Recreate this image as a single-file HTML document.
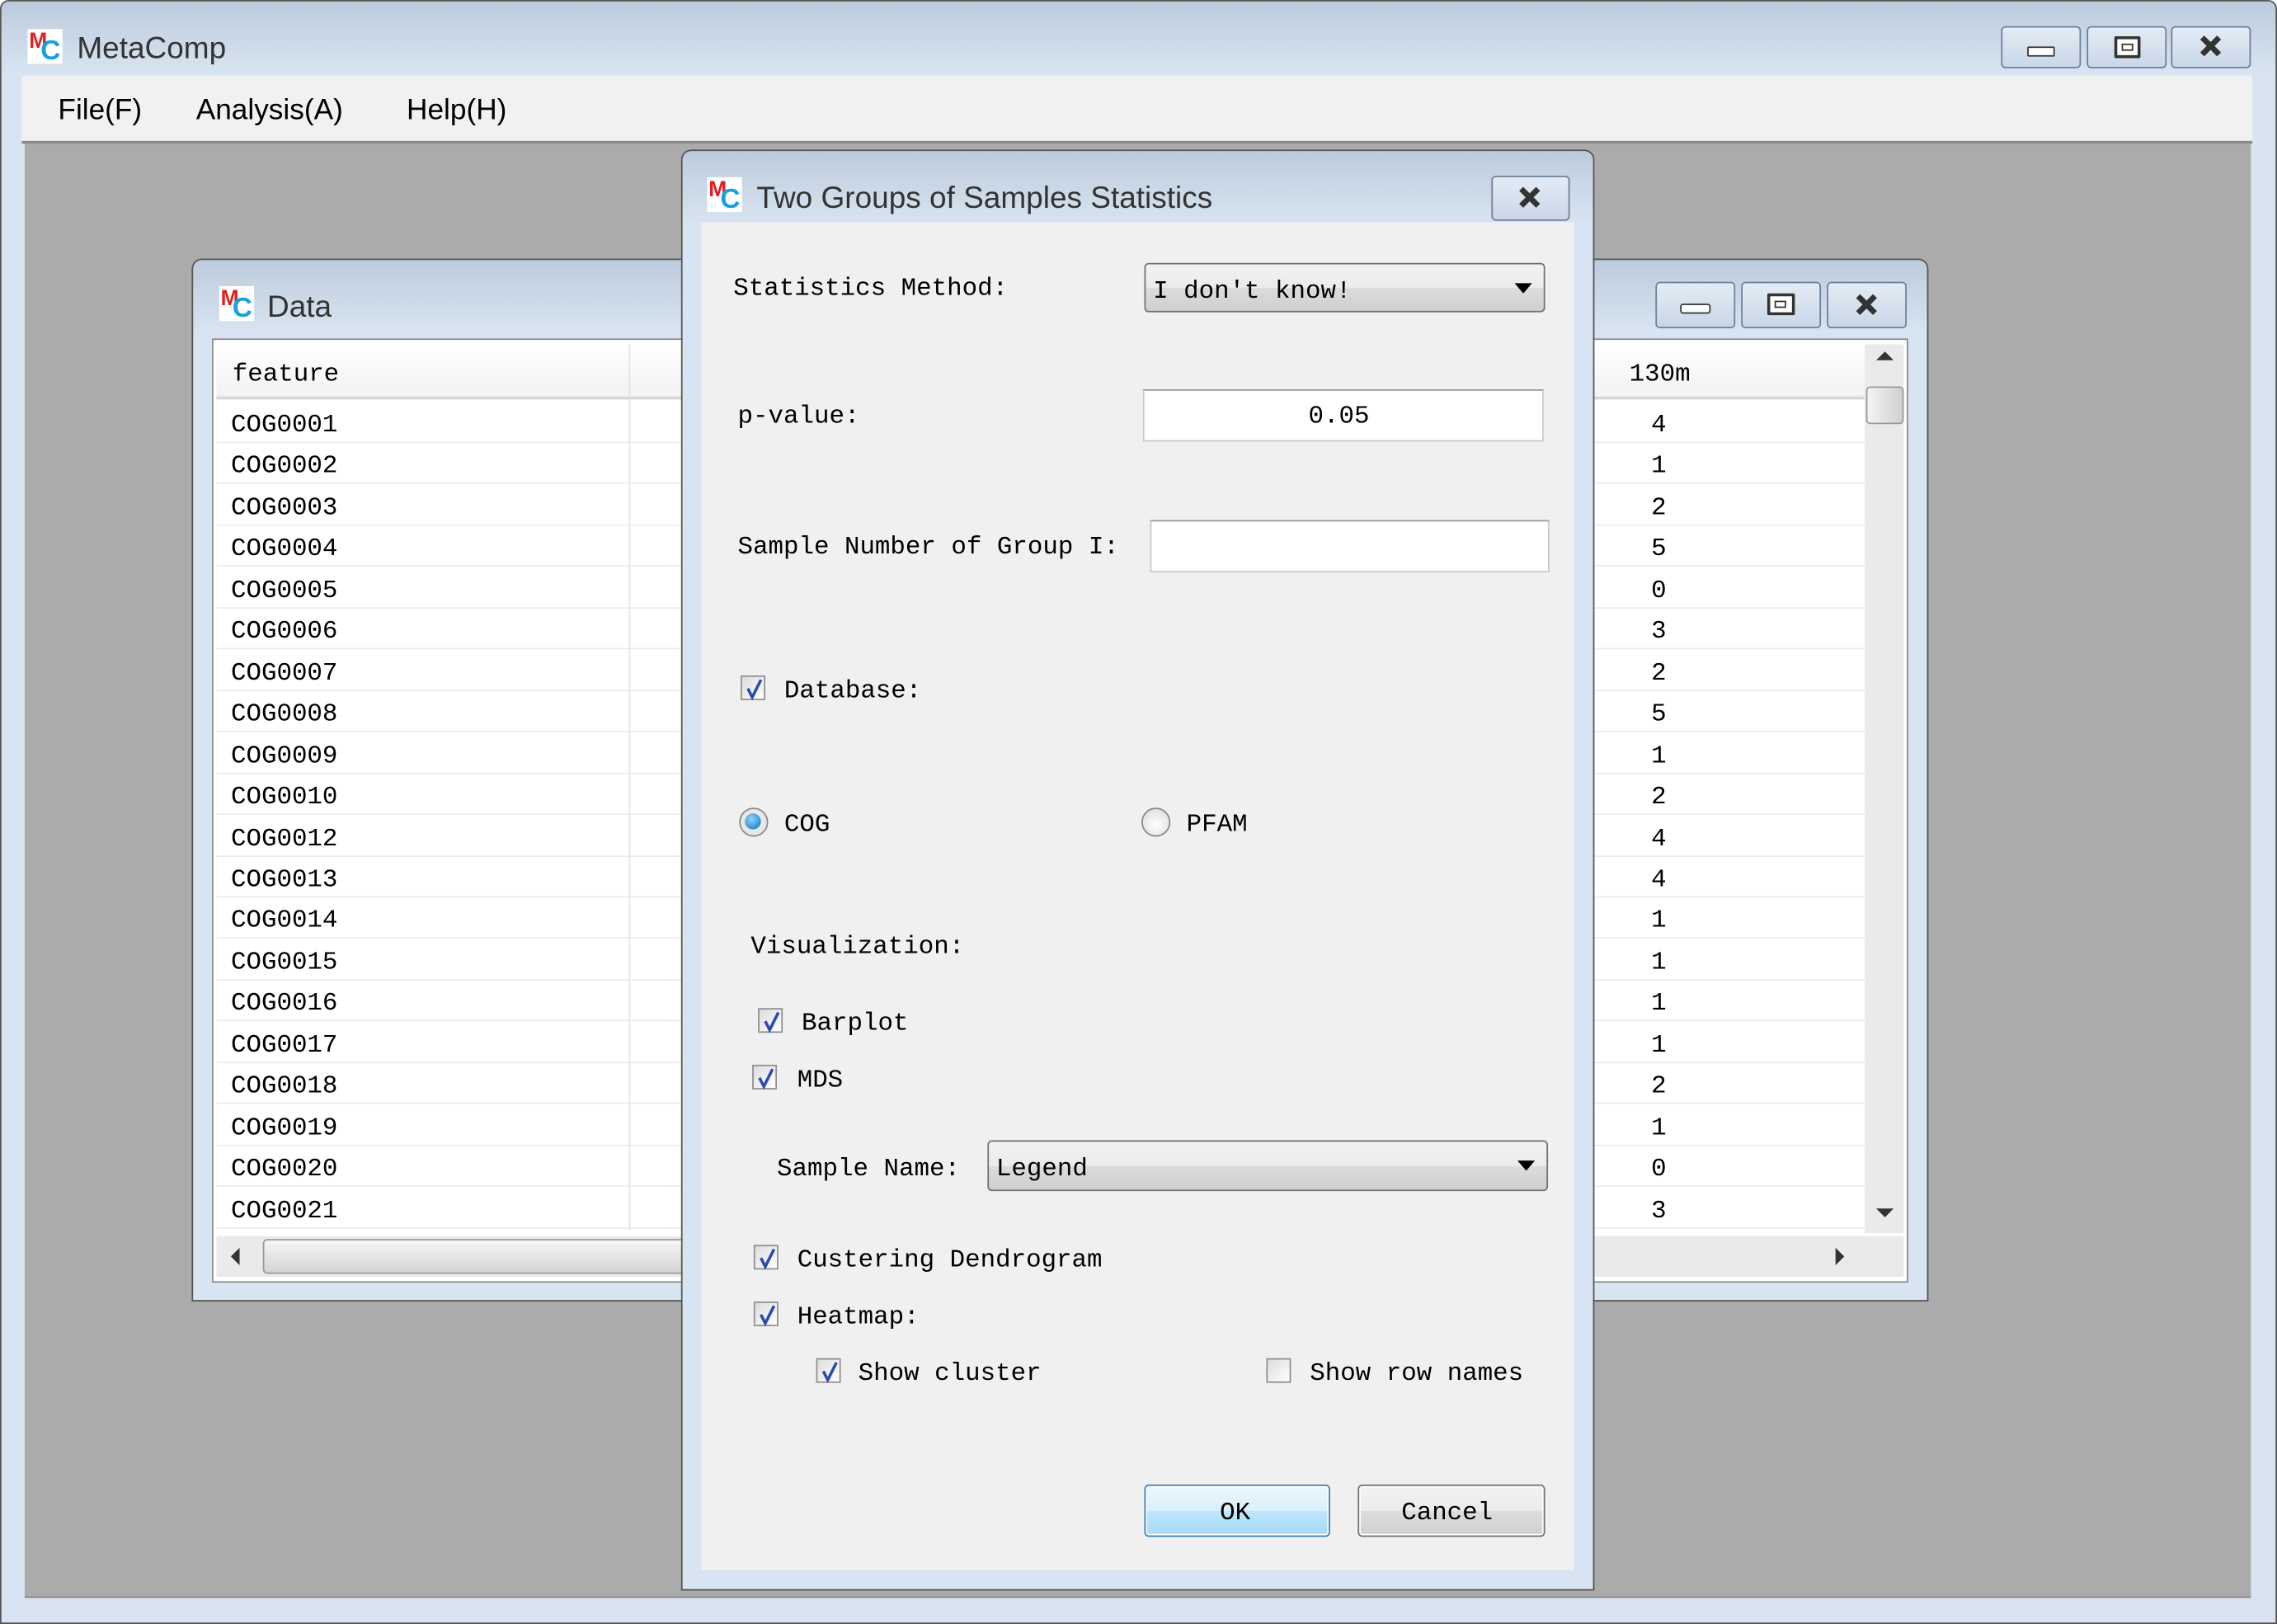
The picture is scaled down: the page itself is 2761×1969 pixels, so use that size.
<!DOCTYPE html>
<html><head><meta charset="utf-8"><style>
html,body{margin:0;padding:0;width:2761px;height:1969px;overflow:hidden;background:#fff}
#w{position:absolute;left:0;top:0;width:1568px;height:1118px;transform:scale(1.76084,1.76118);transform-origin:0 0;font-family:"Liberation Sans",sans-serif;}
.a{position:absolute}
.mono{font-family:"Liberation Mono","DejaVu Sans Mono",monospace;font-size:17.5px;color:#000;white-space:pre;line-height:20px;margin-top:2px}
.tt{margin-top:2px;color:#333;font-size:21px}
.tb{position:absolute;border:1px solid #6d7f99;border-radius:3px;background:linear-gradient(#e4ecf5,#c9d7e8);}
.cb{position:absolute;width:17px;height:17px;border:1px solid #8e8f8f;background:linear-gradient(135deg,#dcdcdc,#fff);box-sizing:border-box}
.cb svg{position:absolute;left:1px;top:0}
.logo{position:absolute;width:24px;height:24px;background:#fff}
.logo b{position:absolute;left:1px;top:0;color:#e02020;font:bold 15px "Liberation Sans",sans-serif}
.logo i{position:absolute;left:9px;top:5px;color:#1aa0e0;font:bold 19px "Liberation Sans",sans-serif;font-style:normal}
.row{position:absolute;left:0;width:1135px;height:28px;border-bottom:1px solid #ececec}
.x{position:absolute;font:bold 20px 'Liberation Sans';color:#eef2f7;-webkit-text-stroke:1.2px #333}
</style></head><body><div id="w">
<div class="a" style="left:0;top:0;width:1566px;height:1116px;border:1px solid #555;border-radius:6px 6px 0 0;background:linear-gradient(#bccbdc 0,#d8e4f1 50px,#d8e4f1 100%)"></div>
<div class="logo" style="left:19px;top:20px"><b>M</b><i>C</i></div>
<div class="a tt" style="left:53px;top:20px">MetaComp</div>
<div class="tb" style="left:1378px;top:18px;width:53px;height:27px"><div class="a" style="left:17px;top:13px;width:17px;height:5px;border:1px solid #333;background:#fff;border-radius:1px"></div></div>
<div class="tb" style="left:1437px;top:18px;width:53px;height:27px"><div class="a" style="left:18px;top:6px;width:14px;height:11px;border:2px solid #333;background:#fff;border-radius:1px"></div><div class="a" style="left:23px;top:11px;width:6px;height:3px;border:1px solid #333"></div></div>
<div class="tb" style="left:1495px;top:18px;width:53px;height:27px"><div class="x" style="left:18px;top:1px">✕</div></div>
<div class="a" style="left:15px;top:52px;width:1536px;height:45px;background:#f1f1f1;border-bottom:2px solid #8a8a8a"></div>
<div class="a" style="left:40px;top:65px;font-size:20px;color:#000">File(F)</div>
<div class="a" style="left:135px;top:65px;font-size:20px;color:#000">Analysis(A)</div>
<div class="a" style="left:280px;top:65px;font-size:20px;color:#000">Help(H)</div>
<div class="a" style="left:17px;top:99px;width:1533px;height:1000px;background:#ababab;border-bottom:1px solid #888"></div>
<div class="a" style="left:132px;top:178px;width:1194px;height:716px;border:1px solid #555;border-radius:7px 7px 0 0;background:linear-gradient(#bccbdc 0,#d8e4f1 50px,#d8e4f1 100%)"></div>
<div class="logo" style="left:151px;top:197px"><b>M</b><i>C</i></div>
<div class="a tt" style="left:184px;top:198px">Data</div>
<div class="tb" style="left:1140px;top:194px;width:53px;height:30px"><div class="a" style="left:16px;top:14px;width:19px;height:5px;border:1px solid #333;background:#fff;border-radius:2px"></div></div>
<div class="tb" style="left:1199px;top:194px;width:53px;height:30px"><div class="a" style="left:17px;top:7px;width:15px;height:11px;border:2px solid #333;background:#fff;border-radius:1px"></div><div class="a" style="left:22px;top:12px;width:6px;height:3px;border:1px solid #333"></div></div>
<div class="tb" style="left:1258px;top:194px;width:53px;height:30px"><div class="x" style="left:18px;top:3px">✕</div></div>
<div class="a" style="left:146px;top:233px;width:1166px;height:648px;border:1px solid #8a8a8a;background:#fff;overflow:hidden">
 <div class="a" style="left:2px;top:3px;width:1135px;height:36px;background:linear-gradient(#fff,#f1f2f4);border-bottom:2px solid #d5d5d5"></div>
 <div class="a mono" style="left:13px;top:12px">feature</div>
 <div class="a mono" style="left:975px;top:12px">130m</div>
 <div class="a" style="left:286px;top:3px;width:1px;height:610px;background:#e3e3e3"></div>
 <div id="rows" class="a" style="left:2px;top:42px;width:1135px;height:570px"></div>
 <div class="a" style="left:1137px;top:3px;width:27px;height:612px;background:#eaeaea"></div>
 <div class="a" style="left:1145px;top:8px;width:0;height:0;border-left:6px solid transparent;border-right:6px solid transparent;border-bottom:6px solid #333"></div>
 <div class="a" style="left:1138px;top:32px;width:24px;height:24px;border:1px solid #999;border-radius:3px;background:linear-gradient(90deg,#f4f4f4,#d0d0d0)"></div>
 <div class="a" style="left:1145px;top:598px;width:0;height:0;border-left:6px solid transparent;border-right:6px solid transparent;border-top:6px solid #333"></div>
 <div class="a" style="left:2px;top:617px;width:1162px;height:28px;background:#eaeaea"></div>
 <div class="a" style="left:12px;top:625px;width:0;height:0;border-top:6px solid transparent;border-bottom:6px solid transparent;border-right:6px solid #333"></div>
 <div class="a" style="left:34px;top:619px;width:300px;height:22px;border:1px solid #999;border-radius:3px;background:linear-gradient(#f6f6f6,#d4d4d4)"></div>
 <div class="a" style="left:1117px;top:625px;width:0;height:0;border-top:6px solid transparent;border-bottom:6px solid transparent;border-left:6px solid #333"></div>
</div>
<div class="a" style="left:469px;top:103px;width:627px;height:990px;border:1px solid #555;border-radius:7px 7px 0 0;background:linear-gradient(#bccbdc 0,#d8e4f1 50px,#d8e4f1 100%)"></div>
<div class="logo" style="left:487px;top:122px"><b>M</b><i>C</i></div>
<div class="a tt" style="left:521px;top:123px">Two Groups of Samples Statistics</div>
<div class="tb" style="left:1027px;top:121px;width:52px;height:29px"><div class="x" style="left:17px;top:2px">✕</div></div>
<div class="a" style="left:483px;top:153px;width:601px;height:928px;background:#f0f0f0"></div>

<div class="a mono" style="left:505px;top:187px">Statistics Method:</div>
<div class="a" style="left:788px;top:181px;width:274px;height:32px;border:1px solid #707070;border-radius:3px;background:linear-gradient(#f2f2f2 0,#ebebeb 50%,#dcdcdc 51%,#cfcfcf 100%)"></div>
<div class="a mono" style="left:794px;top:189px">I don't know!</div>
<div class="a" style="left:1043px;top:195px;width:0;height:0;border-left:6px solid transparent;border-right:6px solid transparent;border-top:7px solid #000"></div>

<div class="a mono" style="left:508px;top:275px">p-value:</div>
<div class="a" style="left:787px;top:268px;width:274px;height:34px;border:1px solid #c8c8c8;border-top-color:#999;background:#fff"></div>
<div class="a mono" style="left:901px;top:275px">0.05</div>

<div class="a mono" style="left:508px;top:365px">Sample Number of Group I:</div>
<div class="a" style="left:792px;top:358px;width:273px;height:34px;border:1px solid #c8c8c8;border-top-color:#999;background:#fff"></div>

<div class="cb" style="left:510px;top:465px"><svg width="15" height="17"><path d="M3 8 L6 14 L12 2" stroke="#2a4ab0" stroke-width="2" fill="none"/></svg></div>
<div class="a mono" style="left:540px;top:464px">Database:</div>

<div class="a" style="left:509px;top:556px;width:18px;height:18px;border:1px solid #888;border-radius:50%;background:#e8e8e8"></div>
<div class="a" style="left:513px;top:560px;width:11px;height:11px;border-radius:50%;background:radial-gradient(circle at 40% 35%,#8fd3ff,#0a6fb8)"></div>
<div class="a mono" style="left:540px;top:556px">COG</div>
<div class="a" style="left:786px;top:556px;width:18px;height:18px;border:1px solid #888;border-radius:50%;background:radial-gradient(circle at 50% 60%,#fff,#d8d8d8)"></div>
<div class="a mono" style="left:817px;top:556px">PFAM</div>

<div class="a mono" style="left:517px;top:640px">Visualization:</div>
<div class="cb" style="left:522px;top:694px"><svg width="15" height="17"><path d="M3 8 L6 14 L12 2" stroke="#2a4ab0" stroke-width="2" fill="none"/></svg></div>
<div class="a mono" style="left:552px;top:693px">Barplot</div>
<div class="cb" style="left:518px;top:733px"><svg width="15" height="17"><path d="M3 8 L6 14 L12 2" stroke="#2a4ab0" stroke-width="2" fill="none"/></svg></div>
<div class="a mono" style="left:549px;top:732px">MDS</div>

<div class="a mono" style="left:535px;top:793px">Sample Name:</div>
<div class="a" style="left:680px;top:785px;width:384px;height:33px;border:1px solid #707070;border-radius:3px;background:linear-gradient(#f2f2f2 0,#ebebeb 50%,#dcdcdc 51%,#cfcfcf 100%)"></div>
<div class="a mono" style="left:686px;top:793px">Legend</div>
<div class="a" style="left:1045px;top:799px;width:0;height:0;border-left:6px solid transparent;border-right:6px solid transparent;border-top:7px solid #000"></div>

<div class="cb" style="left:519px;top:857px"><svg width="15" height="17"><path d="M3 8 L6 14 L12 2" stroke="#2a4ab0" stroke-width="2" fill="none"/></svg></div>
<div class="a mono" style="left:549px;top:856px">Custering Dendrogram</div>
<div class="cb" style="left:519px;top:896px"><svg width="15" height="17"><path d="M3 8 L6 14 L12 2" stroke="#2a4ab0" stroke-width="2" fill="none"/></svg></div>
<div class="a mono" style="left:549px;top:895px">Heatmap:</div>
<div class="cb" style="left:562px;top:935px"><svg width="15" height="17"><path d="M3 8 L6 14 L12 2" stroke="#2a4ab0" stroke-width="2" fill="none"/></svg></div>
<div class="a mono" style="left:591px;top:934px">Show cluster</div>
<div class="cb" style="left:872px;top:935px"></div>
<div class="a mono" style="left:902px;top:934px">Show row names</div>

<div class="a" style="left:788px;top:1022px;width:126px;height:34px;border:1px solid #3c7fb1;border-radius:3px;background:linear-gradient(#eaf6fd 0,#d9f0fc 50%,#bee6fd 51%,#a7d9f5 100%);box-shadow:inset 0 0 0 1px #fff"></div>
<div class="a mono" style="left:840px;top:1030px">OK</div>
<div class="a" style="left:935px;top:1022px;width:127px;height:34px;border:1px solid #707070;border-radius:3px;background:linear-gradient(#f2f2f2 0,#ebebeb 50%,#dddddd 51%,#cfcfcf 100%);box-shadow:inset 0 0 0 1px #fff"></div>
<div class="a mono" style="left:965px;top:1030px">Cancel</div>
</div>
<script>
var ids=["0001","0002","0003","0004","0005","0006","0007","0008","0009","0010","0012","0013","0014","0015","0016","0017","0018","0019","0020","0021"];
var v=[4,1,2,5,0,3,2,5,1,2,4,4,1,1,1,1,2,1,0,3];
var h="";
for(var i=0;i<20;i++){var t=Math.round(i*28.45);
h+='<div class="row" style="top:'+t+'px"></div><div class="a mono" style="left:10px;top:'+(t+5)+'px">COG'+ids[i]+'</div><div class="a mono" style="left:988px;top:'+(t+5)+'px">'+v[i]+'</div>';}
document.getElementById("rows").innerHTML=h;
</script>
</body></html>
